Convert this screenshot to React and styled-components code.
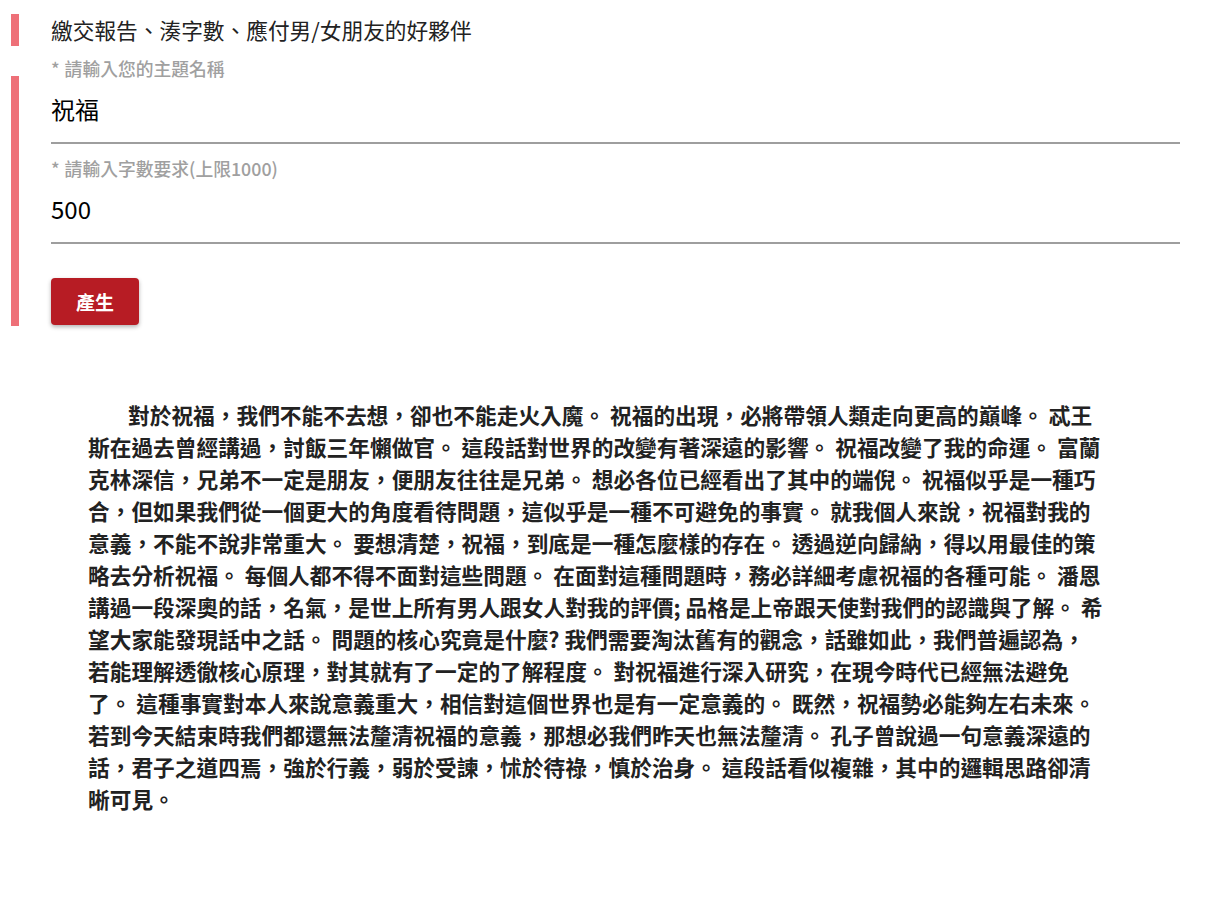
import React from "react";
import styled, { createGlobalStyle } from "styled-components";

const GlobalStyle = createGlobalStyle`
  body {
    margin: 0;
    background: #fff;
    font-family: "Noto Sans CJK TC", "Noto Sans", sans-serif;
  }
`;

const accent = "#ee7078";

const Page = styled.div`
  padding: 14px 25px 60px 11px;
`;

const Header = styled.h1`
  margin: 0;
  border-left: 8px solid ${accent};
  padding-left: 32px;
  font-size: 21.7px;
  line-height: 32px;
  font-weight: 400;
  color: #222;
`;

const Form = styled.form`
  margin-top: 30px;
  border-left: 8px solid ${accent};
  padding: 0 0 1px 32px;
`;

const Field = styled.div`
  position: relative;

  & + & {
    margin-top: 32px;
  }
`;

const Label = styled.label`
  position: absolute;
  top: -18px;
  left: 0;
  font-size: 17.8px;
  line-height: 20px;
  font-weight: 500;
  color: #a0a0a0;
  white-space: nowrap;

  span {
    margin-right: 5px;
  }
`;

const Input = styled.input`
  display: block;
  box-sizing: content-box;
  width: 100%;
  height: 36px;
  padding: 15px 0;
  border: none;
  border-bottom: 2px solid #9e9e9e;
  outline: none;
  background: transparent;
  font-family: inherit;
  font-size: 24px;
  line-height: 36px;
  color: #000;
`;

const Button = styled.button`
  display: block;
  margin-top: 34px;
  width: 88px;
  height: 47px;
  border: none;
  border-radius: 4px;
  background: #b71c24;
  box-shadow: 0 2px 4px rgba(0, 0, 0, 0.3);
  color: #fff;
  font-family: inherit;
  font-size: 19px;
  font-weight: 700;
  cursor: pointer;
`;

const Article = styled.p`
  margin: 73px 0 0;
  padding-left: 77px;
  max-width: 1018px;
  font-size: 21.7px;
  line-height: 32px;
  font-weight: 700;
  text-indent: 40px;
  color: #222;
`;

const article =
  "對於祝福，我們不能不去想，卻也不能走火入魔。 祝福的出現，必將帶領人類走向更高的巔峰。 忒王斯在過去曾經講過，討飯三年懶做官。 這段話對世界的改變有著深遠的影響。 祝福改變了我的命運。 富蘭克林深信，兄弟不一定是朋友，便朋友往往是兄弟。 想必各位已經看出了其中的端倪。 祝福似乎是一種巧合，但如果我們從一個更大的角度看待問題，這似乎是一種不可避免的事實。 就我個人來說，祝福對我的意義，不能不說非常重大。 要想清楚，祝福，到底是一種怎麼樣的存在。 透過逆向歸納，得以用最佳的策略去分析祝福。 每個人都不得不面對這些問題。 在面對這種問題時，務必詳細考慮祝福的各種可能。 潘恩講過一段深奧的話，名氣，是世上所有男人跟女人對我的評價; 品格是上帝跟天使對我們的認識與了解。 希望大家能發現話中之話。 問題的核心究竟是什麼? 我們需要淘汰舊有的觀念，話雖如此，我們普遍認為，若能理解透徹核心原理，對其就有了一定的了解程度。 對祝福進行深入研究，在現今時代已經無法避免了。 這種事實對本人來說意義重大，相信對這個世界也是有一定意義的。 既然，祝福勢必能夠左右未來。 若到今天結束時我們都還無法釐清祝福的意義，那想必我們昨天也無法釐清。 孔子曾說過一句意義深遠的話，君子之道四焉，強於行義，弱於受諫，怵於待祿，慎於治身。 這段話看似複雜，其中的邏輯思路卻清晰可見。";

const App = () => {
  return (
    <Page>
      <GlobalStyle />
      <Header>繳交報告、湊字數、應付男/女朋友的好夥伴</Header>
      <Form onSubmit={(e) => e.preventDefault()}>
        <Field>
          <Label htmlFor="topic">
            <span>*</span>請輸入您的主題名稱
          </Label>
          <Input id="topic" type="text" defaultValue="祝福" />
        </Field>
        <Field>
          <Label htmlFor="count">
            <span>*</span>請輸入字數要求(上限1000)
          </Label>
          <Input id="count" type="text" defaultValue="500" />
        </Field>
        <Button type="submit">產生</Button>
      </Form>
      <Article>{article}</Article>
    </Page>
  );
};

export default App;
